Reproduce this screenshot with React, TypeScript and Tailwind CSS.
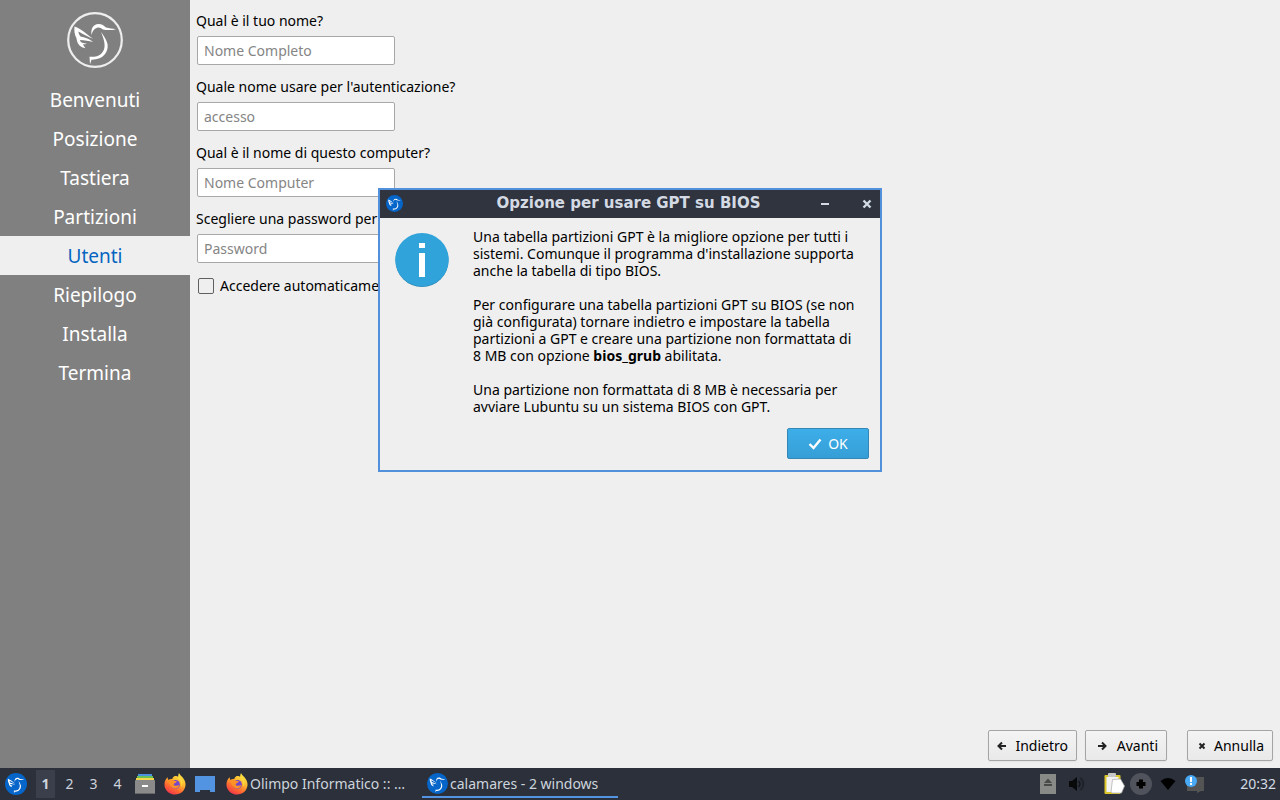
import { useId } from "react";

const steps = ["Benvenuti", "Posizione", "Tastiera", "Partizioni", "Utenti", "Riepilogo", "Installa", "Termina"];

function Bird() {
  return (
    <g fill="#fff">
      <path d="M24.500 23c-.8-6 1.500-11 7-11c3.500 0 5.500 1.800 7.500 3.500c3 .8 6.500 1 10 1.700c-4 1-9 1.300-13 .3c-2-1.700-4-2.500-6-1.700c-3 1-4.500 3.200-5.500 7.200z" />
      <path d="M34 20c3 4 5.500 8 6.500 12c.8 5.500-1.500 10-5.500 13c-3 2-7 2.700-10.500 2.800l-1.500 4.500l-.5-7.500c5 .3 9-.5 11.500-2.800c6-5.500 3.500-13.500 0-22z" />
      <path d="M7.500 14.500c7 2.500 12 7.500 18.500 12.300c-5-1.800-9-4.300-14.500-7.300c0 2 .8 3.500 2 5c4 .8 8.500 2 12.500 5.500c-4-1-8.500-1.800-13-2c.2 1.500 1 2.200 2 2.700c1.500.3 3.500.5 5 1c-1.500.5-2.500.5-4 .5c.5 1.500 1.500 2.500 2.500 4c-5-.7-8.500-4-9-10c-2-3.500-2.500-7.500-2-11.700z" />
    </g>
  );
}

function Logo({ className, outlined = false }: { className: string; outlined?: boolean }) {
  return (
    <svg viewBox="0 0 56 56" className={className} aria-hidden="true">
      <circle cx="28" cy="28" r={outlined ? 26.8 : 28} fill={outlined ? "none" : "#0565c9"} stroke={outlined ? "#eeeeee" : "none"} strokeWidth="2.2" />
      <Bird />
    </svg>
  );
}

function Firefox() {
  const id = useId();
  return (
    <svg viewBox="0 0 24 24" className="size-[22px] shrink-0" aria-hidden="true">
      <defs>
        <linearGradient id={id} x1="0.8" y1="0" x2="0.25" y2="1">
          <stop offset="0" stopColor="#fff04a" />
          <stop offset="0.4" stopColor="#ffb52e" />
          <stop offset="0.7" stopColor="#ff6a30" />
          <stop offset="1" stopColor="#f0304f" />
        </linearGradient>
      </defs>
      <path d="M4 4.500c0 1.500.4 2.300 1 3C6 6.500 7.500 6.300 9 6.500C9.500 4.500 11 3.500 12 3.200c2 0 3 .6 4 1.300C15.500 3 15.500 1.500 16.500 0c.5 3 6.500 5 7 12c.2 7-5.500 11.500-11.500 11.500S.5 19 .5 12.500C.5 9 2 6 4 4.500z" fill={`url(#${id})`} />
      <circle cx="12.500" cy="12.500" r="4.800" fill="#7548c9" />
      <path d="M4.500 8.500C6.500 6.500 9 7 10.500 8.200c1 .6 2.500.2 3.500 1c-.5 1.500-3 1.500-3.500 3c0 1.200 1.500 2 3 1.800c1.200-.2 2-.8 3-.4c-.8 2.800-4 4-6.500 2.800C7 15 6.500 11.500 4.500 8.500z" fill="#ff9226" />
      <path d="M15 6c3 2 4.500 5 3.500 9c2-2 2.500-5 1-8c-1-2-2.500-2.500-3-5c-1 1.500-1.500 3-1.500 4z" fill="#ffd83d" />
    </svg>
  );
}

function FileManagerIcon() {
  return (
    <svg viewBox="0 0 20 22" className="h-[22px] w-5" aria-hidden="true">
      <rect x="3" y="1" width="14" height="3" fill="#4a91df" />
      <rect x="2" y="3" width="16" height="3" fill="#69bf55" />
      <rect x="1" y="5" width="18" height="4" fill="#f4d54b" />
      <rect y="7" width="20" height="14" rx="1" fill="#8a8a8a" />
      <rect y="20" width="20" height="1" fill="#686868" />
      <rect x="7" y="12" width="6" height="2" fill="#fff" />
    </svg>
  );
}

type Glyph = "left" | "right" | "close";
const glyphs: Record<Glyph, string> = {
  left: "M9 5H1.500M5 1.500L1.500 5L5 8.500",
  right: "M1 5h7.500M5 1.500L8.500 5L5 8.500",
  close: "M2.500 2.500l5 5M7.500 2.500l-5 5",
};

function NavButton({ glyph, label, className }: { glyph: Glyph; label: string; className: string }) {
  return (
    <button type="button" className={`flex h-[31px] items-center justify-between rounded-[2px] border border-[#a5a5a5] bg-linear-to-b from-[#f4f4f4] to-[#e9e9e9] pr-2 text-sm text-black shadow-xs ${className}`}>
      <svg viewBox="0 0 10 10" className="size-[10px]" fill="none" stroke="#222" strokeWidth="2" aria-hidden="true">
        <path d={glyphs[glyph]} />
      </svg>
      {label}
    </button>
  );
}

function Field({ id, label, placeholder, type = "text" }: { id: string; label: string; placeholder: string; type?: string }) {
  return (
    <div className="flex flex-col gap-[5px]">
      <label htmlFor={id} className="text-sm leading-5">{label}</label>
      <input id={id} type={type} placeholder={placeholder} className="ml-px h-[29px] w-[198px] rounded-[2px] border border-[#a8a8a8] bg-white px-1.5 text-sm text-black outline-none placeholder:text-[#858585]" />
    </div>
  );
}

function InfoDialog() {
  return (
    <section role="dialog" aria-labelledby="dialog-title" className="absolute top-[188px] left-[378px] w-[504px] border-2 border-[#5290db] bg-[#efefef]">
      <header className="flex h-7 items-center bg-[#2f343f] pr-2 pb-px pl-[6px] text-[#d3dae3]">
        <Logo className="size-[17px]" />
        <h1 id="dialog-title" className="flex-1 pl-[34px] text-center font-['DejaVu_Sans',sans-serif] text-[15px] font-bold">Opzione per usare GPT su BIOS</h1>
        <div className="flex gap-[32px]">
          <button type="button" aria-label="Riduci a icona">
            <svg viewBox="0 0 10 10" className="size-[10px]" stroke="currentColor" strokeWidth="2" aria-hidden="true"><path d="M1 5h8" /></svg>
          </button>
          <button type="button" aria-label="Chiudi">
            <svg viewBox="0 0 10 10" className="size-[10px]" stroke="currentColor" strokeWidth="2.400" aria-hidden="true"><path d="M1.500 1.500l7 7M8.500 1.500l-7 7" /></svg>
          </button>
        </div>
      </header>
      <div className="flex gap-6 pt-[10px] pl-[15px]">
        <svg viewBox="0 0 54 56" className="mt-1 h-14 w-[54px] shrink-0" aria-hidden="true">
          <circle cx="27" cy="28.500" r="26.500" fill="#2a86b3" />
          <circle cx="27" cy="27.700" r="26.700" fill="#30a3da" />
          <rect x="24" y="11" width="6" height="5" fill="#fff" />
          <rect x="24" y="21" width="6" height="24" fill="#fff" />
        </svg>
        <div className="flex flex-col gap-[17px] text-sm leading-[17px] whitespace-nowrap">
          <p>Una tabella partizioni GPT è la migliore opzione per tutti i<br />sistemi. Comunque il programma d'installazione supporta<br />anche la tabella di tipo BIOS.</p>
          <p>Per configurare una tabella partizioni GPT su BIOS (se non<br />già configurata) tornare indietro e impostare la tabella<br />partizioni a GPT e creare una partizione non formattata di<br />8 MB con opzione <strong>bios_grub</strong> abilitata.</p>
          <p>Una partizione non formattata di 8 MB è necessaria per<br />avviare Lubuntu su un sistema BIOS con GPT.</p>
        </div>
      </div>
      <div className="flex justify-end pt-[13px] pr-[11px] pb-[11px]">
        <button type="button" className="flex h-[31px] w-[82px] items-center justify-center gap-1.5 rounded-[2px] border border-[#3488b6] bg-linear-to-b from-[#3daee9] to-[#369ed6] text-sm text-white">
          <svg viewBox="0 0 14 12" className="h-3 w-[14px]" fill="none" stroke="currentColor" strokeWidth="2.400" aria-hidden="true"><path d="M1.500 6l4 4L12.500 1.500" /></svg>
          OK
        </button>
      </div>
    </section>
  );
}

function Tray() {
  return (
    <div className="flex h-full items-center">
      <svg viewBox="0 0 166 24" className="h-6 w-[166px]" role="img" aria-label="Area di notifica">
        <rect x="0" y="2" width="16" height="20" fill="#888a88" />
        <path d="M4 11l4-4.500l4 4.500zM4 12h8v2H4z" fill="#484a49" />
        <path d="M29 9h3l5-4v14l-5-4h-3z" fill="#08090b" />
        <path d="M38.500 9q3 3 0 6" fill="none" stroke="#14151a" strokeWidth="1.500" />
        <path d="M40.500 6q6 6 0 12" fill="none" stroke="#202229" strokeWidth="2" />
        <rect x="64.500" y="3" width="16" height="19" rx="1" fill="#ddc72c" />
        <rect x="66.500" y="5" width="12" height="15" fill="#f2f2f2" />
        <rect x="68" y="1" width="8" height="4" rx="1" fill="#c7c7c7" />
        <path d="M72.500 7.500l8-.5l4 7l-3 7h-9.500l-1-1z" fill="#fff" stroke="#aaa" strokeWidth=".7" />
        <circle cx="101" cy="12" r="11" fill="#50535b" />
        <path d="M101 7.500v9M96.500 12h9" stroke="#000" strokeWidth="4" />
        <path d="M120.500 9q7.500-6 15 0L128 18z" fill="#000" />
        <path d="M147 5h17v14h-3l-4 2v-2h-10z" fill="#545454" />
        <circle cx="151" cy="9" r="6" fill="#49a9f5" />
        <path d="M151 5v5M151 11v2" stroke="#fff" strokeWidth="2" />
      </svg>
      <time className="ml-[34px] text-sm text-[#d3dae3]">20:32</time>
    </div>
  );
}

function Taskbar() {
  return (
    <footer className="flex h-8 shrink-0 items-center bg-[#2b303b] pr-1 pl-[5px] text-sm text-[#ced4dc]">
      <button type="button" aria-label="Menu"><Logo className="size-[22px]" /></button>
      <nav aria-label="Aree di lavoro" className="ml-[9px] flex gap-[5px]">
        {[1, 2, 3, 4].map((n) => (
          <button key={n} type="button" className={n === 1 ? "h-7 w-[19px] bg-[#3a3f4b] font-bold" : "h-7 w-[19px]"}>{n}</button>
        ))}
      </nav>
      <div className="ml-2 flex items-center gap-[9px]">
        <button type="button" aria-label="Gestore file"><FileManagerIcon /></button>
        <button type="button" aria-label="Firefox"><Firefox /></button>
        <button type="button" aria-label="Mostra desktop">
          <svg viewBox="0 0 20 16" className="h-4 w-5" aria-hidden="true"><path d="M0 0h20v16h-5v-2H5v2H0z" fill="#5294e2" /></svg>
        </button>
      </div>
      <button type="button" className="ml-[11px] flex h-full w-[196px] items-center gap-[2px] text-left whitespace-nowrap">
        <Firefox />Olimpo Informatico :: …
      </button>
      <button type="button" className="flex h-[30px] w-[196px] items-center gap-[2px] self-start border-b-2 border-[#5294e2] pt-[3px] pl-[5px] text-left whitespace-nowrap">
        <Logo className="size-[21px]" />calamares - 2 windows
      </button>
      <div className="ml-auto"><Tray /></div>
    </footer>
  );
}

export default function App() {
  return (
    <div className="relative flex min-h-screen flex-col bg-[#efefef] font-['Noto_Sans',sans-serif] text-black">
      <div className="flex flex-1">
        <aside className="w-[190px] shrink-0 bg-[#808080] pt-3">
          <Logo outlined className="mx-auto mb-3 size-14" />
          <ol>
            {steps.map((step) => (
              <li key={step} className={step === "Utenti" ? "flex h-[39px] items-center justify-center bg-[#efefef] pt-[2px] text-[19px] text-[#0565c0]" : "flex h-[39px] items-center justify-center pt-[2px] text-[19px] text-white"}>{step}</li>
            ))}
          </ol>
        </aside>
        <main className="flex flex-1 flex-col justify-between pt-[11px] pr-[7px] pb-[7px] pl-1.5">
          <form className="flex flex-col gap-3">
            <Field id="name" label="Qual è il tuo nome?" placeholder="Nome Completo" />
            <Field id="login" label="Quale nome usare per l'autenticazione?" placeholder="accesso" />
            <Field id="host" label="Qual è il nome di questo computer?" placeholder="Nome Computer" />
            <Field id="password" label="Scegliere una password per" placeholder="Password" type="password" />
            <div className="flex items-center gap-1.5 pl-[2px]">
              <input id="autologin" type="checkbox" className="size-4 appearance-none rounded-[2px] border border-[#606060] bg-[#efefef] checked:bg-[#3daee9]" />
              <label htmlFor="autologin" className="text-sm leading-[22px]">Accedere automaticamente</label>
            </div>
          </form>
          <div className="flex justify-end gap-2">
            <NavButton glyph="left" label="Indietro" className="w-[89px] pl-2" />
            <NavButton glyph="right" label="Avanti" className="mr-3 w-[82px] pl-[11px]" />
            <NavButton glyph="close" label="Annulla" className="w-[86px] pl-[9px]" />
          </div>
        </main>
      </div>
      <Taskbar />
      <InfoDialog />
    </div>
  );
}
